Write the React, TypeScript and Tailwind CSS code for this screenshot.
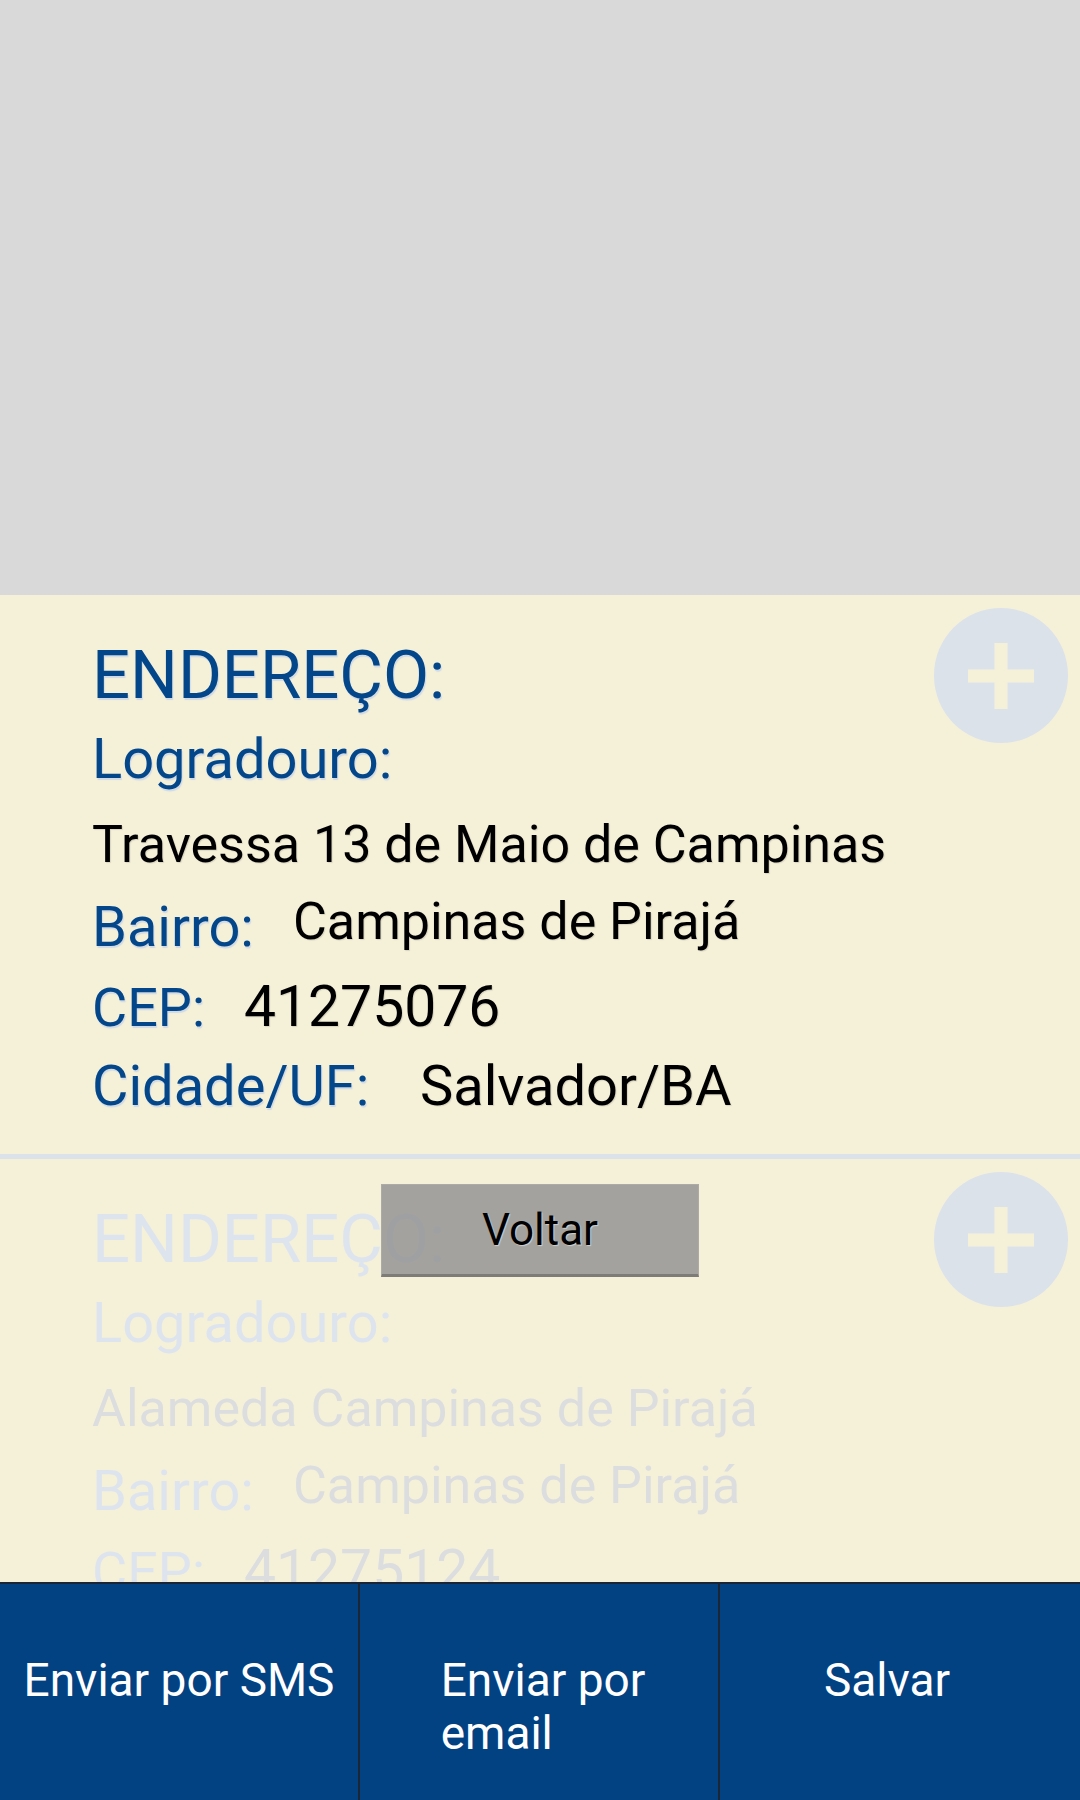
import React from "react";

function PlusCircle() {
  return (
    <div className="absolute right-[12px] top-[13px] flex h-[135px] w-[134px] items-center justify-center rounded-full bg-[#dce2ea]">
      <svg width="66" height="66" viewBox="0 0 66 66">
        <rect x="0" y="26.5" width="66" height="13" fill="#f5f1d9" />
        <rect x="26.5" y="0" width="13" height="66" fill="#f5f1d9" />
      </svg>
    </div>
  );
}

function Card({
  faded,
  street,
  bairro,
  cep,
  cidade,
}: {
  faded?: boolean;
  street: string;
  bairro: string;
  cep: string;
  cidade: string;
}) {
  const lab = faded
    ? "text-[#dde4ee]"
    : "text-[#03468a] [text-shadow:1px_2px_1px_rgba(200,212,230,0.8)]";
  const val = faded
    ? "text-[#dcdddf]"
    : "text-black [text-shadow:1px_1px_1px_rgba(0,0,0,0.12)]";
  return (
    <div className="relative bg-[#f5f1d9] pl-[92px] pt-[40px] pb-[29px]">
      <PlusCircle />
      <div className={`h-[80px] text-[67px] leading-[80px] ${lab}`}>ENDEREÇO:</div>
      <div className={`h-[88px] text-[56px] leading-[88px] ${lab}`}>Logradouro:</div>
      <div className={`h-[84px] text-[52px] leading-[84px] whitespace-nowrap ${val}`}>{street}</div>
      <div className="flex h-[80px] items-start whitespace-nowrap">
        <span className={`w-[201px] text-[56px] leading-[80px] ${lab}`}>Bairro:</span>
        <span className={`text-[52px] leading-[70px] ${val}`}>{bairro}</span>
      </div>
      <div className="flex h-[80px] items-baseline whitespace-nowrap">
        <span className={`w-[152px] text-[54px] leading-[80px] ${lab}`}>CEP:</span>
        <span className={`text-[57px] leading-[80px] ${val}`}>{cep}</span>
      </div>
      <div className="flex h-[78px] items-baseline whitespace-nowrap">
        <span className={`w-[328px] text-[56px] leading-[78px] ${lab}`}>Cidade/UF:</span>
        <span className={`text-[56px] leading-[78px] ${val}`}>{cidade}</span>
      </div>
    </div>
  );
}

export default function App() {
  return (
    <div
      className="flex h-[1800px] w-[1080px] flex-col overflow-hidden bg-[#f5f1d9]"
      style={{ fontFamily: "Roboto, 'Noto Sans', sans-serif" }}
    >
      <div className="h-[595px] shrink-0 bg-[#d9d9d9]" />
      <div className="relative min-h-0 flex-1 overflow-hidden">
        <Card
          street="Travessa 13 de Maio de Campinas"
          bairro="Campinas de Pirajá"
          cep="41275076"
          cidade="Salvador/BA"
        />
        <div className="h-[5px] bg-[#dce2ea]" />
        <div className="relative">
          <Card
            faded
            street="Alameda Campinas de Pirajá"
            bairro="Campinas de Pirajá"
            cep="41275124"
            cidade="Salvador/BA"
          />
          <button className="absolute left-[381px] top-[25px] z-[5] flex h-[93px] w-[318px] items-center justify-center border border-[rgba(175,174,170,0.8)] border-b-[3px] border-b-[rgba(110,109,106,0.7)] bg-[rgba(143,142,143,0.8)] text-[44px] text-black [text-shadow:1px_1px_1px_rgba(255,255,255,0.5)]">
            Voltar
          </button>
        </div>
      </div>
      <div className="grid h-[218px] shrink-0 grid-cols-[358px_360px_362px] border-t-2 border-[#1a2535] bg-[#024182] text-[46px] leading-[53px] text-white">
        <div className="flex justify-center pt-[70px]">
          <span className="whitespace-nowrap">Enviar por SMS</span>
        </div>
        <div className="flex justify-center border-l-2 border-[#1a2535] pt-[70px] pl-[8px]">
          <span className="inline-block text-left">
            Enviar por
            <br />
            email
          </span>
        </div>
        <div className="flex justify-center border-l-2 border-[#1a2535] pt-[70px] pr-[26px]">
          <span>Salvar</span>
        </div>
      </div>
    </div>
  );
}
